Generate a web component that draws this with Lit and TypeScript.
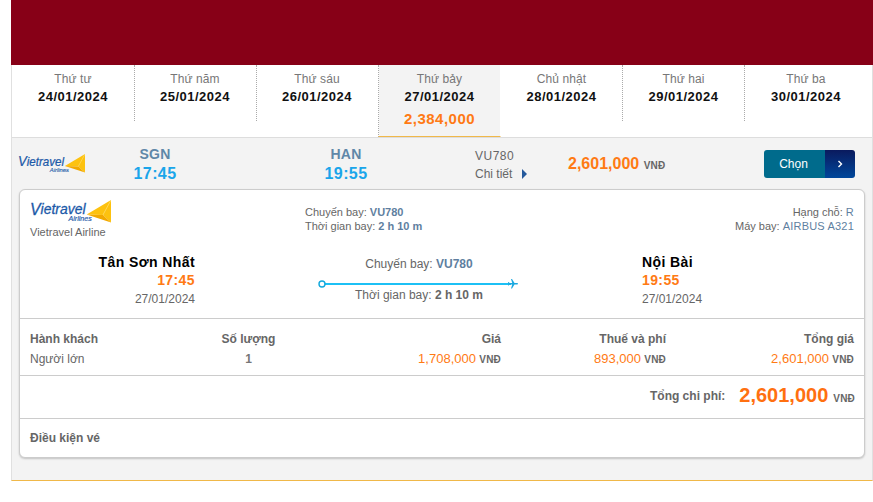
import { LitElement, html, css, svg } from "lit";
import { customElement } from "lit/decorators.js";

const days = [
  ["Thứ tư", "24/01/2024"],
  ["Thứ năm", "25/01/2024"],
  ["Thứ sáu", "26/01/2024"],
  ["Thứ bảy", "27/01/2024", "2,384,000"],
  ["Chủ nhật", "28/01/2024"],
  ["Thứ hai", "29/01/2024"],
  ["Thứ ba", "30/01/2024"],
];

const logo = (cls: string) => html`<svg class=${cls} viewBox="0 0 80 23" preserveAspectRatio="none" aria-label="Vietravel Airlines">
  ${svg`<path d="M56 14.5 L80 0 L80 22.5 L72 15 Z" fill="#fdc20f"/>
  <path d="M56 14.5 L72 15 L80 22.5 Z" fill="#f2a900"/>
  <path d="M80 0 L72 15" stroke="#ffe58a" stroke-width=".6" fill="none"/>
  <text x="0" y="14.5" font-family="Liberation Sans" font-style="italic" font-size="15" textLength="55" lengthAdjust="spacingAndGlyphs" fill="#1b59a8" stroke="#1b59a8" stroke-width=".3"><tspan font-size="17">V</tspan>ietravel</text>
  <text x="38" y="21.5" font-family="Liberation Sans" font-style="italic" font-size="6.5" textLength="23" lengthAdjust="spacingAndGlyphs" fill="#1b59a8" stroke="#1b59a8" stroke-width=".15">Airlines</text>`}
</svg>`;

@customElement("app-root")
export class AppRoot extends LitElement {
  static styles = css`
    :host { display: block; width: 873px; height: 502px; padding-left: 11px; box-sizing: border-box; background: #fff;
      font-family: "Liberation Sans", Arial, sans-serif; font-size: 12px; color: #666; overflow: hidden; }
    .hero { height: 65px; background: #870017; }
    .box { border-left: 1px solid #e0e0e0; border-right: 1px solid #e0e0e0; border-bottom: 1px solid #f0b849; height: 416px; box-sizing: border-box; background: #f3f3f3; }
    .tabs { display: flex; height: 72px; padding-left: 1px; background: #fff; border-bottom: 1px solid #ddd; }
    .tab { width: 122px; box-sizing: border-box; text-align: center; padding-top: 7px; height: 56px; border-right: 1px dotted #aaa; flex: none; }
    .tab:nth-child(-n+3) { padding-right: 1px; }
    .tab:last-child { border-right: none; }
    .tab.active { background: #f3f3f3; background-clip: padding-box; height: 72px; border-left: 1px dotted #aaa; margin-left: -1px; width: 123px; border-right: 1px solid transparent; border-bottom: 1px solid #f0b849; }
    .tab .d { color: #777; line-height: 14px; letter-spacing: .1px; }
    .tab .date { color: #111; font-weight: 700; font-size: 13px; line-height: 18px; margin-top: 2px; letter-spacing: .5px; }
    .tab .p { color: #ff7a14; font-weight: 700; font-size: 15px; line-height: 18px; margin-top: 4px; letter-spacing: .5px; }
    .row { display: grid; grid-template-columns: 67px 140px 51px 140px 59px 93px 196px 91px; height: 51px; padding-left: 6px; align-items: start; }
    .logo-s { width: 67px; height: 19px; margin-top: 16px; display: block; }
    .airport { text-align: center; padding-top: 8px; }
    .airport b { display: block; font-size: 14px; line-height: 17px; color: #5f87a8; letter-spacing: .3px; }
    .airport i { display: block; font-style: normal; font-weight: 700; font-size: 16px; line-height: 20px; margin-top: 1px; color: #1aa5ea; letter-spacing: .4px; }
    .flight { padding-top: 9px; line-height: 18px; }
    .fn { letter-spacing: .5px; }
    .flight .more { display: flex; align-items: center; gap: 10px; }
    .tri { width: 0; height: 0; border-left: 5px solid #24599c; border-top: 5px solid transparent; border-bottom: 5px solid transparent; }
    .price { font-weight: 700; font-size: 16px; color: #ff7a14; padding-top: 16px; line-height: 20px; white-space: nowrap; }
    .cur { font-size: 10px; font-weight: 700; color: #666; letter-spacing: .2px; }
    .btn { display: flex; height: 28px; width: 91px; margin-top: 12px; border-radius: 3px; overflow: hidden; color: #fff; }
    .btn .l { width: 61px; box-sizing: border-box; padding-right: 2px; background: #006b8c; text-align: center; line-height: 28px; font-size: 12px; }
    .btn .r { width: 30px; background: linear-gradient(#0a1a5e, #00479b); display: flex; align-items: center; justify-content: center; }
    .card { margin: 0 7px 0 7px; height: 269px; background: #fff; border: 1px solid #ccc; border-radius: 6px; box-sizing: border-box; box-shadow: 0 1px 2px rgba(0,0,0,.2); display: flex; flex-direction: column; }
    .card > * { flex: none; }
    .top { display: grid; grid-template-columns: 275px 1fr auto; padding: 10px 10px 0 10px; height: 50px; box-sizing: border-box; }
    .logo-l { width: 81px; height: 23px; display: block; }
    .an { line-height: 14px; margin-top: 2px; font-size: 11px; }
    .meta { line-height: 14px; padding-top: 5px; font-size: 11px; }
    .meta b { font-weight: 400; color: #5f7f9f; letter-spacing: .2px; }
    .meta .s { font-weight: 700; letter-spacing: 0; }
    .right { text-align: right; }
    .route { display: grid; grid-template-columns: 175px 1fr 222px; height: 78px; padding-top: 14px; box-sizing: border-box; }
    .pt { text-align: right; }
    .pt.to { text-align: left; }
    .pt .n { font-weight: 700; font-size: 14px; line-height: 17px; color: #000; letter-spacing: .4px; }
    .pt .t { font-weight: 700; font-size: 14px; line-height: 18px; color: #ff7a14; letter-spacing: .4px; }
    .pt .dd { line-height: 20px; }
    .mid { text-align: center; margin-left: 125px; width: 198px; }
    .mid .lab { line-height: 14px; margin-top: 3px; }
    .mid b { color: #5f7f9f; }
    .mid .dur b { color: #666; }
    .line { height: 12px; margin: 7px 0 -5px; }
    .line svg { display: block; overflow: visible; }
    .grid { border-top: 1px solid #ccc; display: grid; grid-template-columns: 150px 137px 1fr 165px 188px; padding: 10px 10px 0; height: 57px; box-sizing: border-box; align-content: start; }
    .grid > * { line-height: 20px; white-space: nowrap; }
    .grid .h { font-weight: 700; }
    .c { text-align: center; }
    .ra { text-align: right; }
    .o { color: #ff7a14; font-size: 13px; }
    .qty { font-weight: 700; color: #777; }
    .total { border-top: 1px solid #ccc; height: 43px; display: flex; justify-content: flex-end; align-items: center; padding: 0 9px 4px 0; box-sizing: border-box; }
    .total .tl { font-weight: 700; margin-right: 14px; padding-top: 2px; }
    .total .tp { font-weight: 700; font-size: 20px; color: #ff7010; margin-right: 5px; }
    .total .cur { padding-top: 6px; }
    .cond { border-top: 1px solid #ccc; padding: 12px 10px; font-weight: 700; line-height: 14px; height: 39px; box-sizing: border-box; }
  `;

  render() {
    return html`
      <div class="hero"></div>
      <div class="box">
        <div class="tabs">
          ${days.map(([d, date, p]) => html`<div class="tab ${p ? "active" : ""}">
            <div class="d">${d}</div>
            <div class="date">${date}</div>
            ${p ? html`<div class="p">${p}</div>` : ""}
          </div>`)}
        </div>
        <div class="row">
          ${logo("logo-s")}
          <div class="airport"><b>SGN</b><i>17:45</i></div>
          <div></div>
          <div class="airport"><b>HAN</b><i>19:55</i></div>
          <div></div>
          <div class="flight"><div class="fn">VU780</div><div class="more">Chi tiết <i class="tri"></i></div></div>
          <div class="price">2,601,000 <span class="cur">VNĐ</span></div>
          <div class="btn"><div class="l">Chọn</div><div class="r">
            <svg width="6" height="8" viewBox="0 0 6 8"><path d="M1.5 1 L4.5 4 L1.5 7" fill="none" stroke="#fff" stroke-width="1.4"/></svg>
          </div></div>
        </div>
        <div class="card">
          <div class="top">
            <div>${logo("logo-l")}<div class="an">Vietravel Airline</div></div>
            <div class="meta">Chuyến bay: <b class="s">VU780</b><br>Thời gian bay: <b class="s">2 h 10 m</b></div>
            <div class="meta right">Hạng chỗ: <b>R</b><br>Máy bay: <b>AIRBUS A321</b></div>
          </div>
          <div class="route">
            <div class="pt"><div class="n">Tân Sơn Nhất</div><div class="t">17:45</div><div class="dd">27/01/2024</div></div>
            <div class="mid">
              <div class="lab">Chuyến bay: <b>VU780</b></div>
              <div class="line">
                <svg width="198" height="12" viewBox="0 0 198 12">
                  <line x1="2" y1="6" x2="191" y2="6" stroke="#1cc0f5" stroke-width="2"/>
                  <circle cx="2" cy="6" r="3" fill="#fff" stroke="#12a8dc" stroke-width="1.4"/>
                  <g transform="translate(187 0) scale(.5) rotate(90 12 12)"><path fill="#1aa8e0" d="M21 16v-2l-8-5V3.5c0-.83-.67-1.5-1.5-1.5S10 2.67 10 3.5V9l-8 5v2l8-2.5V19l-2 1.5V22l3.5-1 3.5 1v-1.5L13 19v-5.5l8 2.5z"/></g>
                </svg>
              </div>
              <div class="lab dur">Thời gian bay: <b>2 h 10 m</b></div>
            </div>
            <div class="pt to"><div class="n">Nội Bài</div><div class="t">19:55</div><div class="dd">27/01/2024</div></div>
          </div>
          <div class="grid">
            <div class="h">Hành khách</div><div class="h c">Số lượng</div><div class="h ra">Giá</div><div class="h ra">Thuế và phí</div><div class="h ra">Tổng giá</div>
            <div>Người lớn</div><div class="c qty">1</div>
            <div class="ra"><span class="o">1,708,000</span> <span class="cur">VNĐ</span></div>
            <div class="ra"><span class="o">893,000</span> <span class="cur">VNĐ</span></div>
            <div class="ra"><span class="o">2,601,000</span> <span class="cur">VNĐ</span></div>
          </div>
          <div class="total"><span class="tl">Tổng chi phí:</span><span class="tp">2,601,000</span><span class="cur">VNĐ</span></div>
          <div class="cond">Điều kiện vé</div>
        </div>
      </div>
    `;
  }
}
